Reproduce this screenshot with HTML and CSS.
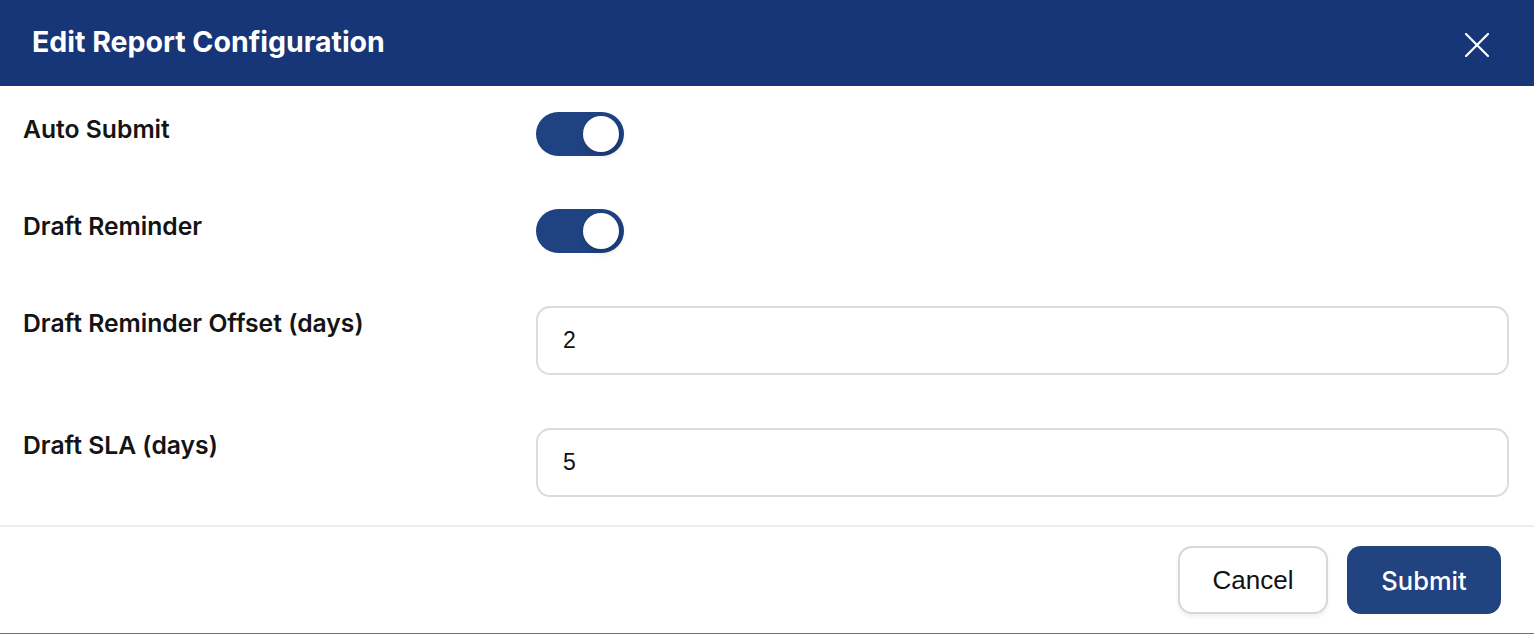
FILE: index.html
```html
<!DOCTYPE html>
<html lang="en">
<head>
<meta charset="utf-8">
<title>Edit Report Configuration</title>
<link rel="stylesheet" href="styles.css">
</head>
<body>
<div class="modal">
  <header class="modal-header">
    <h1 class="modal-title">Edit Report Configuration</h1>
    <button class="close-btn" aria-label="Close">
      <svg width="24" height="24" viewBox="0 0 24 24"><path d="M1 1 L23 23 M23 1 L1 23" stroke="#fff" stroke-width="2.2" stroke-linecap="square" fill="none"/></svg>
    </button>
  </header>
  <div class="modal-body">
    <div class="row">
      <label class="label">Auto Submit</label>
      <div class="control"><span class="toggle on"><span class="knob"></span></span></div>
    </div>
    <div class="row">
      <label class="label">Draft Reminder</label>
      <div class="control"><span class="toggle on"><span class="knob"></span></span></div>
    </div>
    <div class="row">
      <label class="label">Draft Reminder Offset (days)</label>
      <div class="control"><input class="input" type="text" value="2"></div>
    </div>
    <div class="row">
      <label class="label">Draft SLA (days)</label>
      <div class="control"><input class="input" type="text" value="5"></div>
    </div>
  </div>
  <footer class="modal-footer">
    <button class="btn btn-cancel">Cancel</button>
    <button class="btn btn-submit">Submit</button>
  </footer>
</div>
<div class="backdrop-edge"></div>
</body>
</html>
```
FILE: styles.css
```css
* { box-sizing: border-box; }
html, body { margin: 0; padding: 0; }
body {
  width: 1534px;
  height: 634px;
  overflow: hidden;
  background: #fff;
  font-family: Inter, Roboto, "Liberation Sans", sans-serif;
}
.modal {
  display: flex;
  flex-direction: column;
  height: 633px;
  background: #fff;
}
.modal-header {
  height: 86px;
  background: #163677;
  display: flex;
  align-items: center;
  justify-content: space-between;
  padding: 0 45px 0 32px;
}
.modal-title {
  margin: -4px 0 0 0;
  color: #fff;
  font-size: 28.5px;
  font-weight: 700;
  letter-spacing: 0;
}
.close-btn {
  background: none;
  border: 0;
  padding: 0;
  width: 24px;
  height: 24px;
  margin-top: 3px;
  cursor: pointer;
  display: flex;
}
.modal-body {
  padding: 26px 25px 0 23px;
  display: flex;
  flex-direction: column;
  gap: 53px;
  flex: 1;
}
.row {
  display: flex;
  align-items: flex-start;
}
.label {
  width: 513px;
  flex: none;
  font-size: 24.7px;
  line-height: 34px;
  font-weight: 600;
  color: #141414;
}
.control { flex: 1; display: flex; }
.toggle {
  width: 88px;
  height: 44px;
  border-radius: 22px;
  background: #1f4282;
  position: relative;
  display: block;
}
.knob {
  position: absolute;
  top: 4px;
  left: 47px;
  width: 36px;
  height: 36px;
  border-radius: 50%;
  background: #fff;
  box-shadow: 2px 3px 6px rgba(0,0,0,0.18);
}
.input {
  width: 100%;
  height: 69px;
  border: 2px solid #dcdcdc;
  border-radius: 14px;
  padding: 0 25px;
  font-family: "Liberation Sans", Arial, sans-serif;
  font-size: 23px;
  color: #111;
  background: #fff;
  outline: none;
}
.modal-footer {
  border-top: 2px solid #ededed;
  height: 108px;
  display: flex;
  justify-content: flex-end;
  align-items: center;
  gap: 19px;
  padding: 0 33px 0 0;
}
.btn {
  height: 68px;
  border-radius: 14px;
  cursor: pointer;
}
.btn-cancel {
  width: 150px;
  background: #fff;
  border: 2px solid #d8d8d8;
  color: #111;
  font-family: "Liberation Sans", Arial, sans-serif;
  font-size: 26px;
  box-shadow: 0 3px 4px rgba(0,0,0,0.06);
}
.btn-submit {
  width: 154px;
  background: #21437f;
  border: 0;
  color: #fff;
  font-family: Inter, Roboto, sans-serif;
  font-size: 25.5px;
  font-weight: 500;
}
.backdrop-edge {
  height: 1px;
  background: #6e6e6e;
}
```
